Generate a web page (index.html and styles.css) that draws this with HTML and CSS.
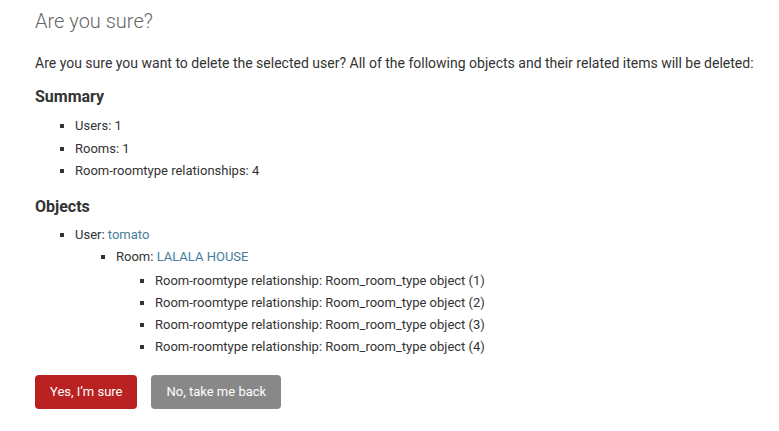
FILE: index.html
```html
<!DOCTYPE html>
<html lang="en">
<head>
<meta charset="utf-8">
<title>Are you sure?</title>
<link rel="stylesheet" href="styles.css">
</head>
<body>
<div class="content">
  <h1 class="title">Are you sure?</h1>
  <p class="intro">Are you sure you want to delete the selected user? All of the following objects and their related items will be deleted:</p>
  <h2 class="heading">Summary</h2>
  <ul class="list">
    <li>Users: 1</li>
    <li>Rooms: 1</li>
    <li>Room-roomtype relationships: 4</li>
  </ul>
  <h2 class="heading heading-objects">Objects</h2>
  <ul class="list list-objects">
    <li>User: <a href="#" class="link">tomato</a>
      <ul class="list nested">
        <li>Room: <a href="#" class="link">LALALA HOUSE</a>
          <ul class="list nested deep">
            <li>Room-roomtype relationship: Room_room_type object (1)</li>
            <li>Room-roomtype relationship: Room_room_type object (2)</li>
            <li>Room-roomtype relationship: Room_room_type object (3)</li>
            <li>Room-roomtype relationship: Room_room_type object (4)</li>
          </ul>
        </li>
      </ul>
    </li>
  </ul>
  <div class="actions">
    <button class="btn btn-danger" type="button">Yes, I’m sure</button>
    <button class="btn btn-cancel" type="button">No, take me back</button>
  </div>
</div>
</body>
</html>
```

FILE: styles.css
```css
html, body {
  margin: 0;
  padding: 0;
  background: #fff;
}

body {
  font-family: Roboto, "Liberation Sans", Arial, sans-serif;
  color: #333;
}

.content {
  padding: 8.5px 0 0 35px;
}

.title {
  margin: 0;
  font-size: 20px;
  line-height: 24px;
  font-weight: 300;
  color: #666;
}

.intro {
  margin: 20px 0 0;
  font-size: 14px;
  line-height: 20px;
  white-space: nowrap;
}

.heading {
  margin: 14.3px 0 0;
  font-size: 16px;
  line-height: 20px;
  font-weight: 700;
  color: #333;
}

.heading-objects {
  margin-top: 14.5px;
}

.list {
  margin: 8.6px 0 0;
  padding: 0 0 0 40px;
}

.list-objects {
  margin-top: 7.5px;
}

.list li {
  list-style-type: square;
  font-size: 13px;
  line-height: 20.3px;
  padding: 1px 0;
}

.nested {
  margin-top: 0;
  padding-left: 41px;
}

.deep {
  margin-top: 2.7px;
  padding-left: 39px;
}

.link {
  color: #447e9b;
  text-decoration: none;
}

.actions {
  display: flex;
  gap: 14px;
  margin-top: 14px;
}

.btn {
  font-family: Roboto, "Liberation Sans", Arial, sans-serif;
  font-size: 13px;
  line-height: 15px;
  padding: 9px 15px 10px;
  border: none;
  border-radius: 4px;
  color: #fff;
  cursor: pointer;
}

.btn-danger {
  background: #ba2121;
}

.btn-cancel {
  background: #888;
}
```
